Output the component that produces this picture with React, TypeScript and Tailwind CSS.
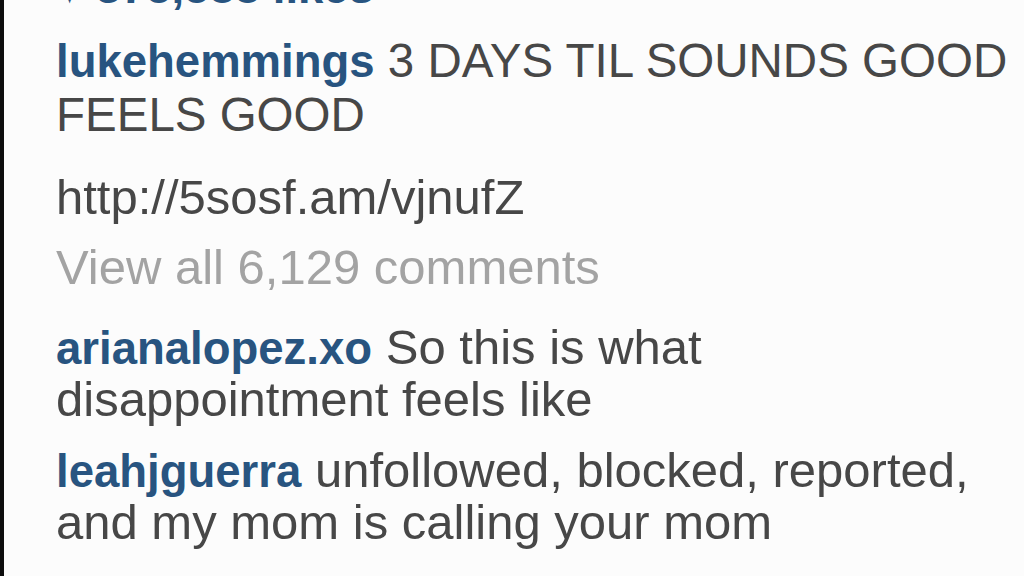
type Comment = {
  user: string;
  text: string;
};

const comments: Comment[] = [
  { user: "arianalopez.xo", text: "So this is what disappointment feels like" },
  { user: "leahjguerra", text: "unfollowed, blocked, reported, and my mom is calling your mom" },
];

export default function App() {
  return (
    <div
      className="w-[1024px] h-[576px] overflow-hidden bg-[#fcfcfc] border-l-[4px] border-[#0d0d0d]"
      style={{ fontFamily: '"Liberation Sans", Arial, sans-serif' }}
    >
      <div className="pl-[52px] pr-[8px] text-[49px] leading-[51px] text-[#474747]">
        <p className="-mt-[38px] font-bold text-[45.5px] text-[#285480]">♥ 375,588 likes</p>

        <p className="mt-[21px] text-[47.5px] leading-[53px]">
          <span className="font-bold text-[45.5px] text-[#285480]">lukehemmings</span> 3 DAYS TIL
          SOUNDS GOOD FEELS GOOD
        </p>

        <p className="mt-[31px]">http://5sosf.am/vjnufZ</p>

        <p className="mt-[19px] text-[#a3a3a3]">View all 6,129 comments</p>

        {comments.map((c, i) => (
          <p key={i} className={i === 0 ? "mt-[29px]" : "mt-[20px]"}>
            <span className="font-bold text-[45.5px] text-[#285480]">{c.user}</span> {c.text}
          </p>
        ))}
      </div>
    </div>
  );
}
